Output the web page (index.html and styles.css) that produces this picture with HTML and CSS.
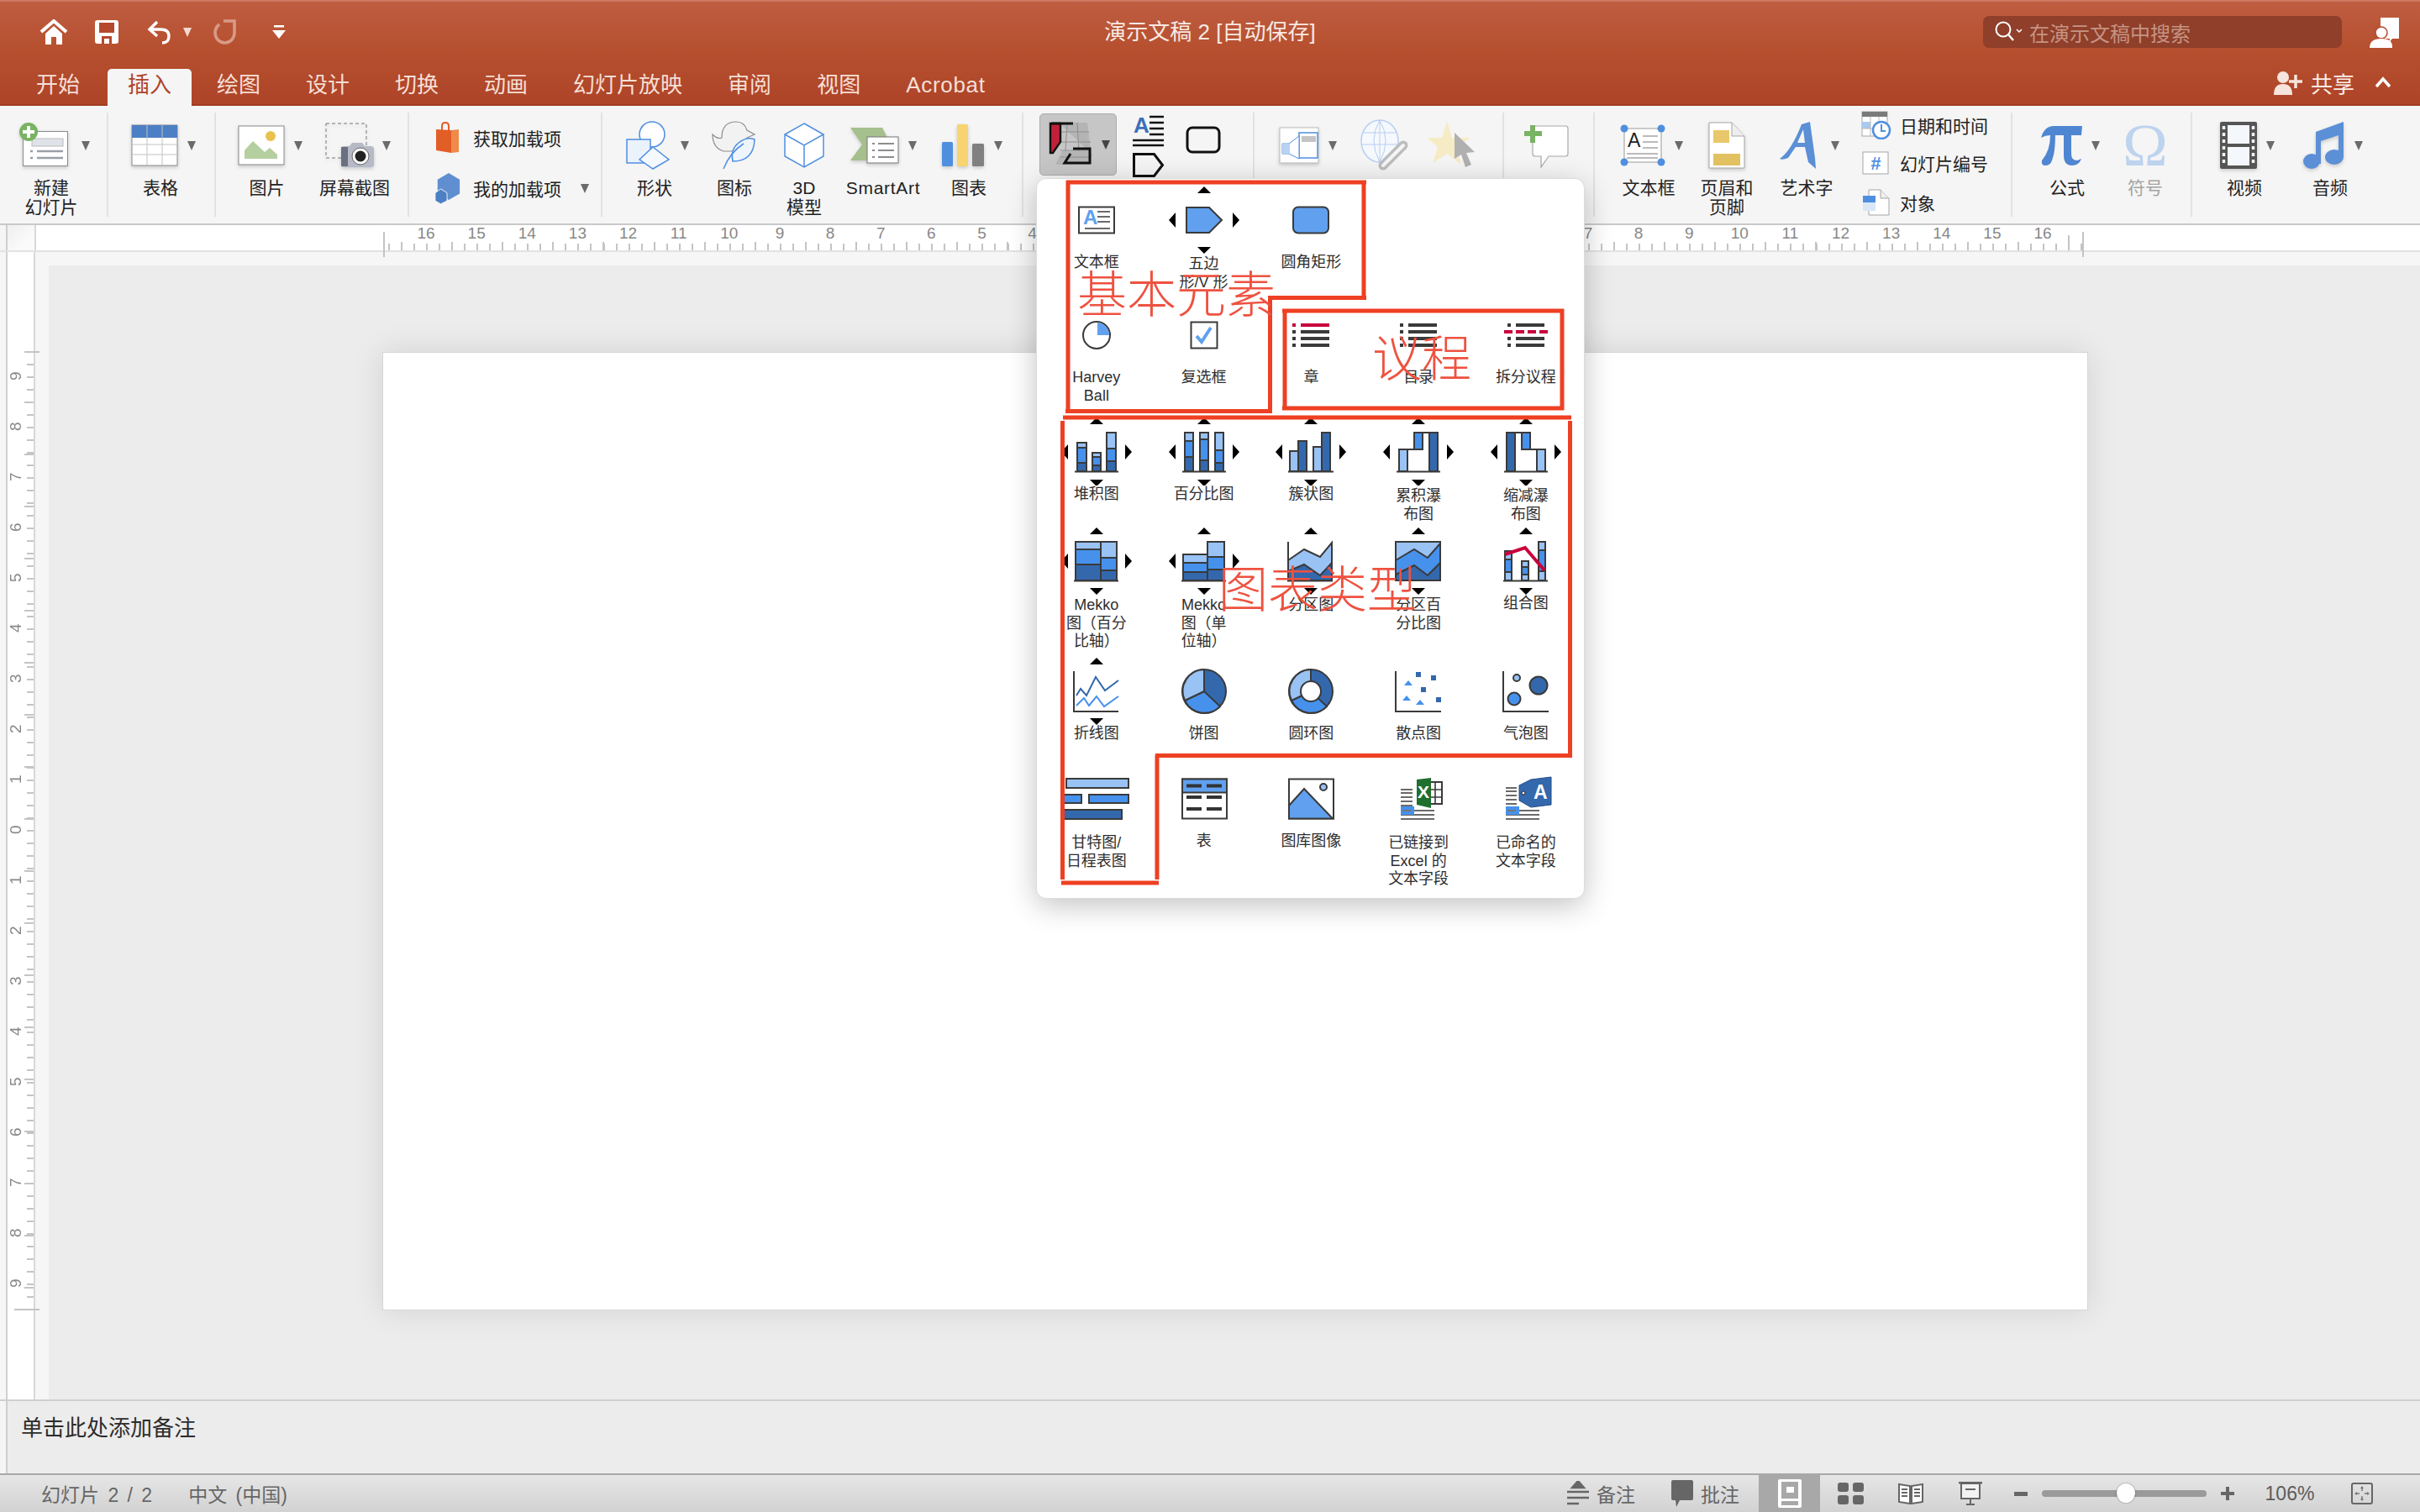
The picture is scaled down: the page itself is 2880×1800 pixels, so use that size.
FILE: index.html
```html
<!DOCTYPE html>
<html lang="zh-CN">
<head>
    <meta charset="UTF-8">
    <title>演示文稿 2</title>
    <link rel="stylesheet" href="styles.css">
</head>
<body>
<svg class="sprites" width="0" height="0">
    <defs>
        <g id="arrows">
            <path d="M0 -41l8 8h-16zM0 41l8 -8h-16zM-42 0l8 -9v18zM42 0l-8 -9v18z"/>
        </g>
        <g id="arrows-tight">
            <path d="M0 -40l8 8h-16zM0 40l8 -8h-16zM-42 0l8 -9v18zM42 0l-8 -9v18z"/>
        </g>
        <g id="arrows-v">
            <path d="M0 -40l8 8h-16zM0 40l8 -8h-16z"/>
        </g>
    </defs>
</svg>

<header class="titlebar">
    <div class="title-row">
        <div class="qat">
            <svg class="qat-home" width="34" height="30" viewBox="0 0 34 30"><path d="M2 15L17 2l15 13" fill="none" stroke="#fff" stroke-width="4"/><path d="M7 17l10-9 10 9v13h-7v-9h-6v9H7z" fill="#fff"/></svg>
            <svg class="qat-save" width="30" height="30" viewBox="0 0 30 30"><path d="M4 1h22q3 0 3 3v22q0 3-3 3H4q-3 0-3-3V4q0-3 3-3z" fill="#fff"/><rect x="6" y="4" width="18" height="12" fill="#b5492e"/><path d="M9 29v-9h12v9h-3v-6h-6v6z" fill="#b5492e"/></svg>
            <svg class="qat-undo" width="30" height="30" viewBox="0 0 30 30"><path d="M12 3L3 12l9 8M4 12h12q10 0 10 8t-8 8" fill="none" stroke="#fff" stroke-width="3.4"/></svg>
            <i class="caret caret-light"></i>
            <svg class="qat-redo" width="30" height="32" viewBox="0 0 30 32"><path d="M13 3h13v14a11.500 12 0 0 1-23 0q0-6 5-10" fill="none" stroke="#d89a87" stroke-width="3.6"/></svg>
            <svg class="qat-more" width="16" height="16" viewBox="0 0 16 16"><path d="M2 0h12v2.500H2zM0 6h16l-8 10z" fill="#fff"/></svg>
        </div>
        <div class="doc-title">演示文稿 2 [自动保存]</div>
        <div class="title-right">
            <div class="search">
                <svg width="36" height="30" viewBox="0 0 36 30"><circle cx="12" cy="12" r="8.500" fill="none" stroke="#fff" stroke-width="2"/><path d="M18 18l6 7" stroke="#fff" stroke-width="2.400"/><path d="M28 12l3 3 3-3" fill="none" stroke="#fff" stroke-width="1.500"/></svg>
                <span>在演示文稿中搜索</span>
            </div>
            <svg class="account" width="36" height="38" viewBox="0 0 36 38"><path d="M13 1h22v25l-8 0-4 5 1-5h-11z" fill="#fff"/><circle cx="14" cy="19" r="7" fill="#fff" stroke="#b5492e" stroke-width="1.500"/><path d="M0 37q0-11 14-11t13 11z" fill="#fff"/></svg>
        </div>
    </div>
    <nav class="tabs">
        <div class="tab tab-first">开始</div>
        <div class="tab tab-active">插入</div>
        <div class="tab">绘图</div>
        <div class="tab">设计</div>
        <div class="tab">切换</div>
        <div class="tab">动画</div>
        <div class="tab">幻灯片放映</div>
        <div class="tab">审阅</div>
        <div class="tab">视图</div>
        <div class="tab tab-latin">Acrobat</div>
        <div class="share">
            <svg width="36" height="30" viewBox="0 0 36 30"><circle cx="11" cy="9" r="7" fill="#f6e4dd"/><path d="M0 30q0-13 11-13t11 13z" fill="#f6e4dd"/><path d="M26 6v16M18 14h16" stroke="#f6e4dd" stroke-width="3.500"/></svg>
            <span>共享</span>
            <svg class="share-chev" width="20" height="14" viewBox="0 0 20 14"><path d="M2 12l8-9 8 9" fill="none" stroke="#fff" stroke-width="3.500"/></svg>
        </div>
    </nav>
</header>

<section class="ribbon">
    <div class="group g-slide">
        <div class="tool shift">
            <div class="tool-icon">
                <svg class="ico" width="60" height="56" viewBox="0 0 60 56"><rect x="5.500" y="11.500" width="53" height="41" fill="#fff" stroke="#8a8a8a"/><rect x="16" y="20" width="37" height="9" fill="#dfe2e8" stroke="#bbb"/><path d="M14 35h3M22 35h31M14 43h3M22 43h31" stroke="#9a9ea6" stroke-width="2.500"/><circle cx="12" cy="12" r="11" fill="#79b364"/><path d="M12 5v14M5 12h14" stroke="#fff" stroke-width="4"/></svg>
                <i class="caret caret-wide"></i>
            </div>
            <div class="tool-label">新建<br>幻灯片</div>
        </div>
    </div>
    <div class="group g-table">
        <div class="tool shift">
            <div class="tool-icon">
                <svg class="ico" width="56" height="50" viewBox="0 0 56 50"><rect x="1" y="1" width="54" height="48" fill="#fff" stroke="#8a8a8a"/><rect x="1" y="1" width="54" height="15" fill="#4d7fc4"/><path d="M19 1v48M37 1v48M1 24h54M1 36h54" stroke="#c2c2c2"/></svg>
                <i class="caret"></i>
            </div>
            <div class="tool-label">表格</div>
        </div>
    </div>
    <div class="group g-media">
        <div class="tool shift">
            <div class="tool-icon">
                <svg class="ico" width="56" height="48" viewBox="0 0 56 48"><rect x="1" y="1" width="54" height="46" fill="#fff" stroke="#8a8a8a"/><path d="M8 40V30l10-11 14 13 6-5 9 8v5z" fill="#b5cfa0"/><ellipse cx="39" cy="13" rx="6" ry="6" fill="#e9c14f"/></svg>
                <i class="caret"></i>
            </div>
            <div class="tool-label">图片</div>
        </div>
        <div class="tool shift">
            <div class="tool-icon">
                <svg class="ico" width="62" height="54" viewBox="0 0 62 54"><rect x="1" y="1" width="48" height="41" fill="none" stroke="#777" stroke-dasharray="4 3"/><path d="M22 28h7l3-4h12l3 4h7q4 0 4 4v18q0 3-4 3H22q-3 0-3-3V32q0-4 3-4z" fill="#b5bac6"/><rect x="19" y="29" width="8" height="23" fill="#6a7082"/><circle cx="42" cy="40" r="10" fill="#fff" stroke="#666"/><circle cx="42" cy="40" r="6.500" fill="#222"/></svg>
                <i class="caret caret-near"></i>
            </div>
            <div class="tool-label">屏幕截图</div>
        </div>
    </div>
    <div class="group g-addins">
        <div class="list-row">
            <svg width="32" height="40" viewBox="0 0 32 40"><path d="M9 11V6q0-4 4-4t4 4v5" fill="none" stroke="#e25e27" stroke-width="2"/><path d="M2 10l18 1v27l-18-3z" fill="#e25e27"/><path d="M20 11l9-1v27l-9 1z" fill="#f08a4a"/></svg>
            <span>获取加载项</span>
        </div>
        <div class="list-row">
            <svg width="32" height="40" viewBox="0 0 34 40"><path d="M18 1l14 8v18l-14 8-14-8V9z" fill="#5f8fd0"/><path d="M8 21l8 5v10l-8 4-7-4V26z" fill="#4d7fc4" stroke="#f5f5f5"/></svg>
            <span>我的加载项</span>
            <i class="caret"></i>
        </div>
    </div>
    <div class="group g-illus">
        <div class="tool shift">
            <div class="tool-icon">
                <svg width="54" height="58" viewBox="0 0 54 58"><circle cx="31" cy="16" r="15" fill="#fff" stroke="#4f8fdf" stroke-width="1.500"/><rect x="1" y="22" width="28" height="28" fill="#eaf2fc" stroke="#4f8fdf" stroke-width="1.500"/><path d="M32 31l19 15-19 11-16-11z" fill="#f5f9fe" stroke="#4f8fdf" stroke-width="1.500"/></svg>
                <i class="caret"></i>
            </div>
            <div class="tool-label">形状</div>
        </div>
        <div class="tool">
            <div class="tool-icon">
                <svg width="54" height="58" viewBox="0 0 54 58"><path d="M1 16q6 6 11 4 0-19 17-19 10 0 13 10l9 5-9 4q2 8-6 16H14Q1 32 1 16z" fill="#f2f2f2" stroke="#8c8c8c" stroke-width="1.200"/><path d="M51 22q-1 26-26 26-3-14 7-22t19-4z" fill="#eef5fd" stroke="#4f8fdf" stroke-width="1.500"/><path d="M14 57q8-20 24-30" fill="none" stroke="#4f8fdf" stroke-width="1.500"/></svg>
            </div>
            <div class="tool-label">图标</div>
        </div>
        <div class="tool">
            <div class="tool-icon">
                <svg width="48" height="54" viewBox="0 0 48 54"><path d="M24 1l23 13v26L24 53 1 40V14z" fill="#fff" stroke="#4f8fdf" stroke-width="1.500"/><path d="M1 14l23 13 23-13M24 27v26" fill="none" stroke="#4f8fdf" stroke-width="1.500"/></svg>
            </div>
            <div class="tool-label">3D<br>模型</div>
        </div>
        <div class="tool">
            <div class="tool-icon">
                <svg class="ico" width="58" height="44" viewBox="0 0 58 44"><path d="M0 1h38l10 20H14z" fill="#a5bf8d"/><path d="M14 21h30L28 40H0z" fill="#a5bf8d"/><rect x="20" y="12" width="37" height="31" fill="#fff" stroke="#777"/><path d="M26 20h3M33 20h19M26 28h3M33 28h19M26 36h3M33 36h19" stroke="#8c8c8c" stroke-width="2"/></svg>
                <i class="caret"></i>
            </div>
            <div class="tool-label tool-label-latin">SmartArt</div>
        </div>
        <div class="tool shift">
            <div class="tool-icon">
                <svg class="ico" width="52" height="52" viewBox="0 0 52 52"><rect x="1" y="22" width="13" height="29" rx="1.500" fill="#4f8fdf"/><rect x="19" y="1" width="13" height="50" rx="1.500" fill="#f7d46f"/><rect x="37" y="24" width="14" height="27" rx="1.500" fill="#808080"/></svg>
                <i class="caret"></i>
            </div>
            <div class="tool-label">图表</div>
        </div>
    </div>
    <div class="group g-addon">
        <div class="addon-btn">
            <svg class="addon-ico" width="54" height="54" viewBox="0 0 54 54"><path d="M12 1h34l4 34H16l-8 16h40l4-12" fill="#b4b4b4"/><path d="M22 1l-2 34M34 1l2 34M10 12h38M8 24h42M14 34h36M14 42h34" stroke="#8e8e8e" fill="none"/><path d="M2 2h12v22L5 37H2z" fill="#c2203a" stroke="#111" stroke-width="2.400"/><path d="M3 2h26" stroke="#111" stroke-width="3"/><path d="M29 32h20v17H19l7-11" fill="none" stroke="#111" stroke-width="3"/></svg>
            <i class="caret caret-dark"></i>
        </div>
        <svg class="addon-side" width="106" height="80" viewBox="0 0 106 80"><text x="1" y="24" class="addon-a">A</text><path d="M20 5h17M20 12h17M20 19h17M20 26h17M0 33h37M0 39h37" stroke="#111" stroke-width="2.400"/><rect x="65" y="18" width="38" height="29" rx="6" fill="none" stroke="#111" stroke-width="3"/><path d="M1.500 49.500h24l10 13-10 13h-24z" fill="none" stroke="#111" stroke-width="3"/></svg>
    </div>
    <div class="group g-links">
        <svg class="ico" width="48" height="44" viewBox="0 0 48 44"><rect x="1" y="1" width="46" height="42" fill="#fff" stroke="#bbb"/><rect x="24" y="7" width="22" height="30" fill="#fff" stroke="#4f8fdf" stroke-width="1.500"/><rect x="27" y="11" width="17" height="7" fill="#c4c4c4"/><path d="M24 11L12 20H4v12h8l12 6z" fill="#fff" stroke="#4f8fdf"/><rect x="4" y="20" width="9" height="12" fill="#b8d2f2"/></svg>
        <i class="caret"></i>
        <svg class="link-ico" width="60" height="62" viewBox="0 0 60 62"><ellipse cx="24" cy="26" rx="22" ry="25" fill="#f5f8fc" stroke="#b6cff0" stroke-width="1.500"/><path d="M24 1v50M3 16h42M2 30h44M24 1q-14 24 0 50M24 1q14 24 0 50" fill="none" stroke="#b6cff0"/><path d="M28 55l24-24" stroke="#bdbdbd" stroke-width="11" stroke-linecap="round"/><path d="M28 55l24-24" stroke="#f5f5f5" stroke-width="4" stroke-linecap="round"/></svg>
        <svg class="star-ico" width="64" height="58" viewBox="0 0 64 58"><path d="M24 0l6 20 22 0-17 12 6 20-17-13-17 11 6-19L0 20h18z" fill="#f5ecc6"/><path d="M33 14l0 31 8-5 5 15 7-3-6-14 10-1z" fill="#b0b0b0"/></svg>
    </div>
    <div class="group g-comment">
        <svg width="60" height="52" viewBox="0 0 60 52"><path d="M11 2h39q3 0 3 3v30q0 3-3 3H30l-9 13v-13h-7q-3 0-3-3z" fill="#fff" stroke="#a8a8a8" stroke-width="1.200"/><path d="M11 1v21M1 11h21" stroke="#79b364" stroke-width="6"/></svg>
    </div>
    <div class="group g-text">
        <div class="tool shift">
            <div class="tool-icon">
                <svg width="54" height="50" viewBox="0 0 54 50"><rect x="5" y="5" width="44" height="40" fill="#fff" stroke="#999"/><text x="9" y="27" class="mini-a">A</text><path d="M27 14h18M27 21h18M27 28h18M8 35h37M8 40h37" stroke="#bbb" stroke-width="2"/><circle cx="5" cy="5" r="4.500" fill="#4f8fdf"/><circle cx="49" cy="5" r="4.500" fill="#4f8fdf"/><circle cx="5" cy="45" r="4.500" fill="#4f8fdf"/><circle cx="49" cy="45" r="4.500" fill="#4f8fdf"/></svg>
                <i class="caret"></i>
            </div>
            <div class="tool-label">文本框</div>
        </div>
        <div class="tool">
            <div class="tool-icon">
                <svg class="ico" width="44" height="56" viewBox="0 0 44 56"><path d="M1 1h27l15 16v38H1z" fill="#fff" stroke="#a5a5a5"/><path d="M28 1v16h15" fill="#eee" stroke="#a5a5a5"/><rect x="6" y="10" width="19" height="15" fill="#e9c86b"/><rect x="6" y="38" width="32" height="14" fill="#e2c161"/></svg>
            </div>
            <div class="tool-label">页眉和<br>页脚</div>
        </div>
        <div class="tool shift">
            <div class="tool-icon">
                <svg width="50" height="56" viewBox="0 0 50 56"><path d="M0 44q14-10 26-41l10-3 6 43 1 13-9-8-4-18H19l-9 13q-7 3-10 1zM21 25h9l-2-16z" fill="#5b8fd6"/></svg>
                <i class="caret"></i>
            </div>
            <div class="tool-label">艺术字</div>
        </div>
        <div class="mini-list">
            <div class="mini-row">
                <svg width="36" height="34" viewBox="0 0 36 34"><rect x="1" y="1" width="30" height="29" fill="#fff" stroke="#a5a5a5"/><rect x="1" y="1" width="30" height="6" fill="#7a7a7a"/><rect x="1" y="13" width="10" height="8" fill="#a9c9f0"/><path d="M11 7v23M21 7v23M1 21h30" stroke="#bbb"/><circle cx="24" cy="23" r="10" fill="#fff" stroke="#4f8fdf" stroke-width="2.500"/><path d="M24 16v8h5" fill="none" stroke="#4f8fdf" stroke-width="2"/></svg>
                <span>日期和时间</span>
            </div>
            <div class="mini-row">
                <svg width="36" height="28" viewBox="0 0 36 28"><rect x="2" y="1" width="30" height="26" fill="#fff" stroke="#a5a5a5"/><text x="17" y="22" class="mini-hash">#</text></svg>
                <span>幻灯片编号</span>
            </div>
            <div class="mini-row">
                <svg width="36" height="32" viewBox="0 0 36 32"><path d="M9 1h14l10 10v20H9z" fill="#fff" stroke="#a5a5a5"/><path d="M23 1v10h10" fill="#eee" stroke="#a5a5a5"/><rect x="2" y="8" width="15" height="18" fill="#d9e7f8"/><rect x="2" y="8" width="15" height="8" fill="#4f8fdf"/></svg>
                <span>对象</span>
            </div>
        </div>
    </div>
    <div class="group g-symbols">
        <div class="tool shift">
            <div class="tool-icon">
                <svg width="50" height="48" viewBox="0 0 50 48"><path d="M1 15Q5 1 16 1H50L49 12H37V34Q37 42 44 42L49 40Q46 48 38 48Q28 48 28 36V12H18Q18 32 14 42Q12 48 6 48Q1 48 2 42Q12 30 12 12Q6 12 1 15z" fill="#4f86d2"/></svg>
                <i class="caret"></i>
            </div>
            <div class="tool-label">公式</div>
        </div>
        <div class="tool">
            <div class="tool-icon"><span class="glyph-omega">Ω</span></div>
            <div class="tool-label tool-label-off">符号</div>
        </div>
    </div>
    <div class="group g-av">
        <div class="tool shift">
            <div class="tool-icon">
                <svg class="ico" width="44" height="56" viewBox="0 0 44 56"><rect width="44" height="56" rx="2" fill="#555"/><rect x="9" y="4" width="26" height="22" fill="#f4f7fb"/><rect x="9" y="30" width="26" height="22" fill="#f4f7fb"/><path d="M4.500 5v46M39.500 5v46" stroke="#f4f4f4" stroke-width="3.500" stroke-dasharray="4 4"/></svg>
                <i class="caret"></i>
            </div>
            <div class="tool-label">视频</div>
        </div>
        <div class="tool shift">
            <div class="tool-icon">
                <svg class="ico" width="50" height="56" viewBox="0 0 50 56"><path d="M15 12L48 0v42h-6V16L21 23v27h-6z" fill="#5b8fd6"/><ellipse cx="10" cy="47" rx="10" ry="9" fill="#5b8fd6"/><ellipse cx="37" cy="42" rx="11" ry="9" fill="#5b8fd6"/></svg>
                <i class="caret"></i>
            </div>
            <div class="tool-label">音频</div>
        </div>
    </div>
</section>

<main class="editor">
    <div class="ruler-row">
        <div class="ruler-gutter"><div class="ruler-corner"></div></div>
        <div class="ruler-h">
            <div class="scale-h">
                <span>16</span><span>15</span><span>14</span><span>13</span><span>12</span><span>11</span><span>10</span><span>9</span><span>8</span><span>7</span><span>6</span><span>5</span><span>4</span><span>3</span><span>2</span><span>1</span><span>0</span><span>1</span><span>2</span><span>3</span><span>4</span><span>5</span><span>6</span><span>7</span><span>8</span><span>9</span><span>10</span><span>11</span><span>12</span><span>13</span><span>14</span><span>15</span><span>16</span>
            </div>
        </div>
    </div>
    <div class="editor-body">
        <div class="rail">
            <div class="ruler-v">
                <div class="scale-v">
                    <span>9</span><span>8</span><span>7</span><span>6</span><span>5</span><span>4</span><span>3</span><span>2</span><span>1</span><span>0</span><span>1</span><span>2</span><span>3</span><span>4</span><span>5</span><span>6</span><span>7</span><span>8</span><span>9</span>
                </div>
            </div>
        </div>
        <div class="canvas-band">
            <div class="canvas"><div class="slide"></div></div>
        </div>
    </div>
</main>

<section class="notes"><span>单击此处添加备注</span></section>

<footer class="statusbar">
    <div class="status-left">
        <span>幻灯片 2 / 2</span>
        <span>中文 (中国)</span>
    </div>
    <div class="status-right">
        <div class="status-item">
            <svg width="26" height="30" viewBox="0 0 26 30"><path d="M13 0l7 8H6zM0 13h26M0 20h26M0 27h14" stroke="#666" stroke-width="2.400" fill="#666"/></svg>
            <span>备注</span>
        </div>
        <div class="status-item">
            <svg width="26" height="32" viewBox="0 0 26 32"><path d="M2 0h22q2 0 2 2v20q0 2-2 2H10l-4 8-1-8H2q-2 0-2-2V2q0-2 2-2z" fill="#666"/></svg>
            <span>批注</span>
        </div>
        <div class="view-active">
            <svg width="28" height="34" viewBox="0 0 28 34"><rect width="28" height="34" rx="2" fill="#fff"/><rect x="4" y="3" width="20" height="20" fill="#a8a8a8"/><rect x="10" y="9" width="9" height="7" fill="#fff"/><rect x="4" y="26" width="20" height="5" fill="#a8a8a8"/></svg>
        </div>
        <svg width="31" height="26" viewBox="0 0 31 26"><rect width="13" height="11" rx="3" fill="#666"/><rect x="18" width="13" height="11" rx="3" fill="#666"/><rect y="15" width="13" height="11" rx="3" fill="#666"/><rect x="18" y="15" width="13" height="11" rx="3" fill="#666"/></svg>
        <svg width="30" height="26" viewBox="0 0 30 26"><path d="M1 2l13 2v21L1 23zM29 2L16 4v21l13-2z" fill="#fff" stroke="#666" stroke-width="2"/><path d="M4 8h7M4 12h7M4 16h7M19 8h7M19 12h7M19 16h7" stroke="#666" stroke-width="2"/></svg>
        <svg width="30" height="28" viewBox="0 0 30 28"><path d="M1 1h28" stroke="#666" stroke-width="3"/><path d="M4 2h22v18H4z" fill="#f2f2f2" stroke="#666" stroke-width="2"/><path d="M9 9h12" stroke="#666" stroke-width="2"/><path d="M15 20v6M10 27h10" stroke="#666" stroke-width="2"/></svg>
        <i class="zoom-minus"></i>
        <div class="zoom-track"><i class="zoom-thumb"></i></div>
        <svg width="16" height="16" viewBox="0 0 16 16"><path d="M8 0v16M0 8h16" stroke="#666" stroke-width="4"/></svg>
        <span class="zoom-pct">106%</span>
        <svg width="26" height="26" viewBox="0 0 26 26"><rect x="1" y="1" width="24" height="24" rx="2" fill="none" stroke="#666" stroke-width="2"/><path d="M13 5v5M13 16v5M5 13h5M16 13h5" stroke="#777" stroke-width="1.500"/><path d="M13 4l-2 3h4zM13 22l-2-3h4zM4 13l3-2v4zM22 13l-3-2v4z" fill="#777"/></svg>
    </div>
</footer>

<div class="gallery">
    <div class="gallery-grid">
        <div class="cell">
            <svg width="110" height="80" viewBox="-55 -40 110 80"><rect class="line" x="-21" y="-15.500" width="42" height="31" fill="#fff"/><text x="-16" y="5" class="g-a">A</text><path class="line thin" d="M1 -10h15M1 -4h15M1 2h15M-14 10h30"/></svg>
            <div class="cell-label">文本框</div>
        </div>
        <div class="cell">
            <svg width="110" height="80" viewBox="-55 -40 110 80"><use href="#arrows-tight"/><path class="line blue" d="M-21 -15H6L21 0L6 15H-21z"/></svg>
            <div class="cell-label cell-label-low">五边<br>形/V 形</div>
        </div>
        <div class="cell">
            <svg width="110" height="80" viewBox="-55 -40 110 80"><rect class="line blue" x="-21" y="-15.500" width="42" height="31" rx="6"/></svg>
            <div class="cell-label">圆角矩形</div>
        </div>
        <div class="cell"></div>
        <div class="cell"></div>

        <div class="cell">
            <svg width="110" height="80" viewBox="-55 -40 110 80"><circle class="line" cx="0" cy="0" r="16" fill="#fff"/><path class="blue" d="M1 -15A15 15 0 0 1 15 0H1z"/></svg>
            <div class="cell-label">Harvey<br>Ball</div>
        </div>
        <div class="cell">
            <svg width="110" height="80" viewBox="-55 -40 110 80"><rect class="line" x="-15.500" y="-15.500" width="31" height="31" fill="#fff"/><path d="M-9 1l6 7L8 -9" fill="none" stroke="#60a0ef" stroke-width="4"/></svg>
            <div class="cell-label">复选框</div>
        </div>
        <div class="cell">
            <svg width="110" height="80" viewBox="-55 -40 110 80"><g transform="translate(-22 -14)"><rect class="red" y="0" width="4" height="4"/><rect class="red" x="10" y="0" width="34" height="4"/><rect class="ink" y="8" width="4" height="4"/><rect class="ink" x="10" y="8" width="34" height="4"/><rect class="ink" y="16" width="4" height="4"/><rect class="ink" x="10" y="16" width="34" height="4"/><rect class="ink" y="24" width="4" height="4"/><rect class="ink" x="10" y="24" width="34" height="4"/></g></svg>
            <div class="cell-label">章</div>
        </div>
        <div class="cell">
            <svg width="110" height="80" viewBox="-55 -40 110 80"><g transform="translate(-22 -14)"><rect class="ink" y="0" width="4" height="4"/><rect class="ink" x="10" y="0" width="34" height="4"/><rect class="ink" y="8" width="4" height="4"/><rect class="ink" x="10" y="8" width="34" height="4"/><rect class="ink" y="16" width="4" height="4"/><rect class="ink" x="10" y="16" width="34" height="4"/><rect class="ink" y="24" width="4" height="4"/><rect class="ink" x="10" y="24" width="34" height="4"/></g></svg>
            <div class="cell-label">目录</div>
        </div>
        <div class="cell">
            <svg width="110" height="80" viewBox="-55 -40 110 80"><g transform="translate(-26 -14)"><rect class="ink" x="4" y="0" width="4" height="4"/><rect class="ink" x="14" y="0" width="34" height="4"/><path d="M0 10h52" stroke="#c8003c" stroke-width="4" stroke-dasharray="10 4"/><rect class="ink" x="4" y="16" width="4" height="4"/><rect class="ink" x="14" y="16" width="34" height="4"/><rect class="ink" x="4" y="24" width="4" height="4"/><rect class="ink" x="14" y="24" width="34" height="4"/></g></svg>
            <div class="cell-label">拆分议程</div>
        </div>

        <div class="cell">
            <svg width="110" height="80" viewBox="-55 -40 110 80"><use href="#arrows"/><path class="base" d="M-26 23.500H26"/>
                <rect class="line light" x="-23" y="-11" width="11" height="6"/><rect class="line mid" x="-23" y="-5" width="11" height="18"/><rect class="line dark" x="-23" y="13" width="11" height="10"/>
                <rect class="line light" x="-5" y="1" width="10" height="5"/><rect class="line mid" x="-5" y="6" width="10" height="10"/><rect class="line dark" x="-5" y="16" width="10" height="7"/>
                <rect class="line light" x="12" y="-23" width="11" height="19"/><rect class="line mid" x="12" y="-4" width="11" height="15"/><rect class="line dark" x="12" y="11" width="11" height="12"/></svg>
            <div class="cell-label">堆积图</div>
        </div>
        <div class="cell">
            <svg width="110" height="80" viewBox="-55 -40 110 80"><use href="#arrows"/><path class="base" d="M-26 23.500H26"/>
                <rect class="line light" x="-23" y="-23" width="10" height="10"/><rect class="line mid" x="-23" y="-13" width="10" height="19"/><rect class="line dark" x="-23" y="6" width="10" height="17"/>
                <rect class="line light" x="-5" y="-23" width="10" height="8"/><rect class="line mid" x="-5" y="-15" width="10" height="25"/><rect class="line dark" x="-5" y="10" width="10" height="13"/>
                <rect class="line light" x="13" y="-23" width="10" height="21"/><rect class="line mid" x="13" y="-2" width="10" height="15"/><rect class="line dark" x="13" y="13" width="10" height="10"/></svg>
            <div class="cell-label">百分比图</div>
        </div>
        <div class="cell">
            <svg width="110" height="80" viewBox="-55 -40 110 80"><use href="#arrows"/><path class="base" d="M-27 23.500H27"/>
                <rect class="line light" x="-25" y="-1" width="10" height="24"/><rect class="line dark" x="-15" y="-13" width="10" height="36"/><rect class="line light" x="3" y="-6" width="10" height="29"/><rect class="line dark" x="13" y="-23" width="10" height="46"/></svg>
            <div class="cell-label">簇状图</div>
        </div>
        <div class="cell">
            <svg width="110" height="80" viewBox="-55 -40 110 80"><use href="#arrows"/><path class="line" fill="#fff" d="M-23 23V-3H-5V-23H23V23"/><rect class="line light" x="-23" y="-3" width="10" height="26"/><rect class="line mid" x="-5" y="-23" width="10" height="20"/><rect class="line dark" x="13" y="-23" width="10" height="46"/><path class="base" d="M-26 23.500H26"/></svg>
            <div class="cell-label cell-label-low">累积瀑<br>布图</div>
        </div>
        <div class="cell">
            <svg width="110" height="80" viewBox="-55 -40 110 80"><use href="#arrows"/><path class="line" fill="#fff" d="M-23 23V-23H5V-3H23V23"/><rect class="line dark" x="-23" y="-23" width="10" height="46"/><rect class="line mid" x="-5" y="-23" width="10" height="20"/><rect class="line light" x="13" y="-3" width="10" height="26"/><path class="base" d="M-26 23.500H26"/></svg>
            <div class="cell-label cell-label-low">缩减瀑<br>布图</div>
        </div>

        <div class="cell">
            <svg width="110" height="80" viewBox="-55 -40 110 80"><use href="#arrows-tight"/><rect class="line light" x="-25" y="-23" width="30" height="9"/><rect class="line mid" x="-25" y="-14" width="30" height="18"/><rect class="line dark" x="-25" y="4" width="30" height="19"/><rect class="line light" x="5" y="-23" width="19" height="19"/><rect class="line mid" x="5" y="-4" width="19" height="15"/><rect class="line dark" x="5" y="11" width="19" height="12"/><path class="base" d="M-27 23.500H26"/></svg>
            <div class="cell-label cell-label-low">Mekko<br>图（百分<br>比轴）</div>
        </div>
        <div class="cell">
            <svg width="110" height="80" viewBox="-55 -40 110 80"><use href="#arrows-tight"/><rect class="line light" x="-25" y="-8" width="29" height="10"/><rect class="line mid" x="-25" y="2" width="29" height="11"/><rect class="line dark" x="-25" y="13" width="29" height="10"/><rect class="line light" x="4" y="-23" width="20" height="18"/><rect class="line mid" x="4" y="-5" width="20" height="15"/><rect class="line dark" x="4" y="10" width="20" height="13"/><path class="base" d="M-27 23.500H26"/></svg>
            <div class="cell-label cell-label-low">Mekko<br>图（单<br>位轴）</div>
        </div>
        <div class="cell">
            <svg width="110" height="80" viewBox="-55 -40 110 80"><use href="#arrows-v"/><path class="line light" d="M-27 -1L-8 -14L11 -5L25 -22V23H-27z"/><path class="line dark" d="M-27 12L-8 4L11 17L25 2V23H-27z"/><path class="base" d="M-27 -23V23.500H26"/></svg>
            <div class="cell-label cell-label-low">分区图</div>
        </div>
        <div class="cell">
            <svg width="110" height="80" viewBox="-55 -40 110 80"><use href="#arrows-v"/><rect class="light" x="-27" y="-23" width="53" height="46"/><path class="line mid" d="M-27 -1L-5 -14L11 -4L26 -21V23H-27z"/><path class="line dark" d="M-27 16L-5 5L11 17L26 2V23H-27z"/><rect class="base" x="-27" y="-23" width="53" height="46" fill="none"/></svg>
            <div class="cell-label cell-label-low">分区百<br>分比图</div>
        </div>
        <div class="cell">
            <svg width="110" height="80" viewBox="-55 -40 110 80"><use href="#arrows-v"/><rect class="line light" x="-25" y="-12" width="8" height="10"/><rect class="line mid" x="-25" y="-2" width="8" height="15"/><rect class="line light" x="-25" y="13" width="8" height="10"/><rect class="line light" x="-5" y="0" width="8" height="7"/><rect class="line mid" x="-5" y="7" width="8" height="9"/><rect class="line light" x="-5" y="16" width="8" height="7"/><rect class="line light" x="15" y="-23" width="8" height="10"/><rect class="line mid" x="15" y="-13" width="8" height="25"/><rect class="line light" x="15" y="12" width="8" height="11"/><path class="base" d="M-27 23.500H26"/><path d="M-25 -8L-1 -16L22 11" fill="none" stroke="#c8003c" stroke-width="4"/></svg>
            <div class="cell-label">组合图</div>
        </div>

        <div class="cell">
            <svg width="110" height="80" viewBox="-55 -40 110 80"><use href="#arrows-v"/><path class="base" d="M-27 -24V24H26"/><path d="M-24 5L-19 -3L-12 5L-1 -17L10 -1L26 -13" fill="none" stroke="#3368ad" stroke-width="2"/><path d="M-24 17L-15 8L-9 17L0 6L9 18L26 6" fill="none" stroke="#4691ec" stroke-width="2"/></svg>
            <div class="cell-label">折线图</div>
        </div>
        <div class="cell">
            <svg width="110" height="80" viewBox="-55 -40 110 80"><circle class="line dark" r="26"/><path class="line mid" d="M0 0L19 18A26 26 0 0 1 -23 11z"/><path class="line light" d="M0 0L-23 11A26 26 0 0 1 0 -26z"/></svg>
            <div class="cell-label">饼图</div>
        </div>
        <div class="cell">
            <svg width="110" height="80" viewBox="-55 -40 110 80"><circle class="line dark" r="26"/><path class="line mid" d="M0 0L19 18A26 26 0 0 1 -23 11z"/><path class="line light" d="M0 0L-23 11A26 26 0 0 1 0 -26z"/><circle class="line" r="12" fill="#fff"/></svg>
            <div class="cell-label">圆环图</div>
        </div>
        <div class="cell">
            <svg width="110" height="80" viewBox="-55 -40 110 80"><path class="base" d="M-27 -24V24H27"/><rect class="dark" x="-3" y="-23" width="6" height="6"/><rect class="dark" x="15" y="-19" width="6" height="6"/><rect class="dark" x="3" y="-5" width="6" height="6"/><rect class="dark" x="21" y="7" width="6" height="6"/><path class="mid" d="M-12 -13l5 6h-10zM-14 5l5 6h-10zM2 10l5 6h-10z"/></svg>
            <div class="cell-label">散点图</div>
        </div>
        <div class="cell">
            <svg width="110" height="80" viewBox="-55 -40 110 80"><path class="base" d="M-27 -24V24H27"/><circle class="line light" cx="-11" cy="-16" r="4"/><circle class="line dark" cx="15" cy="-7" r="10.500"/><circle class="line mid" cx="-14" cy="9" r="7.500"/></svg>
            <div class="cell-label">气泡图</div>
        </div>

        <div class="cell">
            <svg width="110" height="80" viewBox="-55 -40 110 80"><rect class="line light" x="-36" y="-24" width="74" height="11"/><rect class="line mid" x="-39" y="-5" width="21" height="10"/><rect class="line mid" x="-9" y="-5" width="47" height="10"/><rect class="line dark" x="-39" y="13" width="69" height="11"/></svg>
            <div class="cell-label cell-label-low">甘特图/<br>日程表图</div>
        </div>
        <div class="cell">
            <svg width="110" height="80" viewBox="-55 -40 110 80"><rect class="line" x="-26" y="-23.500" width="53" height="47" fill="#fff"/><rect class="line blue" x="-26" y="-23.500" width="53" height="16"/><path d="M-21 -15.500h18M3 -15.500h18M-21 -2h18M3 -2h18M-21 12h18M3 12h18" stroke="#333" stroke-width="4"/></svg>
            <div class="cell-label">表</div>
        </div>
        <div class="cell">
            <svg width="110" height="80" viewBox="-55 -40 110 80"><rect class="line" x="-26" y="-23.500" width="53" height="47" fill="#fff"/><path class="line blue" d="M-26 23.500V8L-8 -12L26 23.500z"/><ellipse class="line light" cx="15" cy="-14" rx="4" ry="4"/></svg>
            <div class="cell-label">图库图像</div>
        </div>
        <div class="cell">
            <svg width="110" height="80" viewBox="-55 -40 110 80"><path class="line" fill="#fff" d="M12 -20h16v26h-16z"/><path class="line thin" d="M20 -20v26M12 -11h16M12 -2h16"/><path d="M-2 -23l17 -2v36l-17 -4z" fill="#1f6f2e"/><text x="-1" y="-1" class="g-x">X</text><path class="line thin" d="M-21 -11h14M-21 -7h14M-21 -2h14M-21 3h14M-21 8h14"/><path class="line thin" d="M-21 14h40M-21 19h40M-21 24h40"/><rect class="mid" x="-21" y="9" width="16" height="10"/><path d="M-19 14h10" stroke="#777" stroke-width="2"/></svg>
            <div class="cell-label cell-label-low">已链接到<br>Excel 的<br>文本字段</div>
        </div>
        <div class="cell">
            <svg width="110" height="80" viewBox="-55 -40 110 80"><path class="line thin" d="M-24 -13h13M-24 -9h13M-24 -4h13M-24 1h13M-24 6h13M-24 14h40M-24 19h40M-24 24h40"/><path d="M-8 -16L6 -23L30 -26V7L6 10L-8 2L-8 -16z" fill="#3368ad" stroke="#244d85"/><circle cx="-3" cy="-7" r="2" fill="#fff" stroke="#222"/><text x="9" y="0" class="g-tag">A</text><rect class="mid" x="-24" y="9" width="16" height="10"/><path d="M-22 14h10" stroke="#777" stroke-width="2"/></svg>
            <div class="cell-label cell-label-low">已命名的<br>文本字段</div>
        </div>
    </div>
</div>

<svg class="markup" width="2880" height="1800" viewBox="0 0 2880 1800">
    <path d="M1269 217H1626M1623 215V357M1626 354.500H1510M1511.500 352V491M1514 489.500H1268M1271 491V215"/>
    <path d="M1529 368V488M1526 370H1861M1859 368V488M1861 486H1526"/>
    <path d="M1265 497H1870M1264.500 501V1047M1868.500 501V902M1871 899.500H1375M1377 899V1047M1263 1051H1379"/>
</svg>
<div class="mark-note note-basic">基本元素</div>
<div class="mark-note note-agenda">议程</div>
<div class="mark-note note-charts">图表类型</div>
</body>
</html>
```

FILE: styles.css
```css
* {
    margin: 0;
    padding: 0;
    box-sizing: border-box;
}

html, body {
    width: 2880px;
    height: 1800px;
    overflow: hidden;
}

body {
    position: relative;
    display: flex;
    flex-direction: column;
    background: #ececec;
    color: #222;
    font-family: "Liberation Sans", "Noto Sans CJK SC", sans-serif;
    font-size: 21px;
}

.sprites {
    position: absolute;
}

svg {
    flex: none;
    display: block;
}

/* title bar */
.titlebar {
    height: 126px;
    flex: none;
    background: linear-gradient(#bf5d42, #b6502f 45%, #ae4428);
    border-top: 2px solid #cd7a63;
    border-bottom: 2px solid #a03d22;
}

.title-row {
    height: 80px;
    display: grid;
    grid-template-columns: 1fr auto 1fr;
    align-items: start;
}

.qat {
    display: flex;
    align-items: center;
    height: 72px;
    padding-left: 47px;
}

.qat-save { margin-left: 31px; }
.qat-undo { margin-left: 33px; }
.qat-redo { margin-left: 25px; }
.qat-more { margin-left: 41px; }

.caret {
    flex: none;
    display: block;
    width: 0;
    height: 0;
    margin-left: 11px;
    border-left: 5px solid transparent;
    border-right: 5px solid transparent;
    border-top: 11px solid #6b6b6b;
}

.caret-light {
    margin-left: 13px;
    border-top-color: #f3d9cf;
}

.caret-wide { margin-left: 15px; }
.caret-near { margin-left: 6px; }
.caret-dark { border-top-color: #444; margin-left: 9px; }

.doc-title {
    height: 72px;
    line-height: 72px;
    font-size: 26px;
    color: #f8e9e3;
}

.title-right {
    display: flex;
    justify-content: flex-end;
    align-items: flex-start;
    padding-right: 24px;
}

.search {
    width: 427px;
    height: 38px;
    margin-top: 17px;
    padding-left: 12px;
    display: flex;
    align-items: center;
    gap: 7px;
    background: #8f3f2a;
    border-radius: 7px;
    color: #c79382;
    font-size: 24px;
}

.account {
    margin: 18px 0 0 33px;
}

.tabs {
    height: 44px;
    display: flex;
    gap: 6px;
    padding-left: 19px;
    font-size: 26px;
    color: #f6dfd6;
}

.tab {
    height: 44px;
    line-height: 38px;
    padding: 0 24px;
    border-radius: 5px 5px 0 0;
}

.tab-first {
    margin-right: 3px;
}

.tab-latin {
    letter-spacing: 0.7px;
}

.tab-active {
    background: #f5f5f5;
    color: #b0452a;
}

.share {
    margin-left: auto;
    display: flex;
    align-items: center;
    height: 32px;
    padding-right: 34px;
    color: #fbeee9;
    font-size: 26px;
}

.share span { margin-left: 8px; }
.share-chev { margin-left: 24px; }

/* ribbon */
.ribbon {
    height: 142px;
    flex: none;
    display: flex;
    padding-top: 8px;
    background: #f5f5f5;
    border-bottom: 2px solid #c9c9c9;
}

.group {
    height: 124px;
    flex: none;
    display: grid;
    grid-auto-flow: column;
    justify-content: start;
    border-right: 2px solid #e2e2e2;
}

.g-slide { width: 129px; grid-template-columns: 122px; }
.g-table { width: 128px; grid-template-columns: 124px; }
.g-media { width: 230px; grid-template-columns: 121px 88px; }
.g-illus { width: 501px; grid-template-columns: 124px 66px 100px 88px 116px; }
.g-text { width: 497px; grid-template-columns: 128px 58px 132px auto; }
.g-symbols { width: 214px; grid-template-columns: 130px 56px; }
.g-av { width: 271px; border-right: 0; grid-template-columns: 124px 80px; }

.tool {
    display: flex;
    flex-direction: column;
    align-items: center;
}

.tool-icon {
    height: 78px;
    display: flex;
    align-items: center;
}

.shift .tool-icon {
    margin-left: 7px;
}

.tool-label {
    line-height: 23px;
    text-align: center;
    white-space: nowrap;
}

.tool-label-latin {
    letter-spacing: 0.7px;
}

.tool-label-off {
    color: #a3a3a3;
}

.ico {
    filter: drop-shadow(0 2px 2px rgba(0, 0, 0, 0.18));
}

.g-addins {
    width: 230px;
    grid-auto-flow: row;
    align-content: start;
    row-gap: 20px;
    padding: 10px 0 0 30px;
}

.list-row, .mini-row {
    display: flex;
    align-items: center;
    white-space: nowrap;
}

.list-row {
    height: 40px;
    gap: 14px;
}

.g-addins .caret { margin-left: 9px; }

.g-addon {
    width: 275px;
    display: flex;
    padding-left: 19px;
}

.addon-btn {
    width: 92px;
    height: 74px;
    margin-top: 1px;
    display: flex;
    align-items: center;
    padding-left: 10px;
    background: #c6c6c6;
    border: 1px solid #acacac;
    border-radius: 5px;
}

.addon-ico {
    filter: blur(0.7px);
}

.addon-side {
    margin: 0 0 0 19px;
}

.addon-a {
    font-size: 26px;
    font-weight: bold;
    fill: #3d6fb8;
}

.g-links {
    width: 297px;
    height: 124px;
    display: flex;
    align-items: center;
    align-content: start;
    padding: 0 0 46px 29px;
}

.link-ico { margin-left: 27px; }
.star-ico { margin-left: 20px; }

.g-comment {
    width: 108px;
    padding: 14px 0 0 23px;
}

.mini-list {
    margin-left: -1px;
    margin-top: -2px;
    display: flex;
    flex-direction: column;
}

.mini-row {
    gap: 10px;
}

.mini-row:nth-child(1) { height: 34px; margin-bottom: 14px; }
.mini-row:nth-child(2) { height: 28px; margin-bottom: 17px; }
.mini-row:nth-child(3) { height: 32px; }

.mini-a {
    font-size: 23px;
    fill: #222;
}

.mini-hash {
    font-size: 22px;
    font-style: italic;
    font-weight: bold;
    fill: #4f8fdf;
    text-anchor: middle;
}

.glyph-omega {
    font-family: "Liberation Serif", serif;
    font-size: 72px;
    line-height: 60px;
    color: #bdd3ee;
}

/* rulers */
.editor {
    flex: 1;
    display: flex;
    flex-direction: column;
    min-height: 0;
}

.ruler-row {
    height: 32px;
    flex: none;
    display: flex;
    background: #fff;
    border-bottom: 2px solid #e2e2e2;
}

.ruler-gutter {
    width: 41px;
    flex: none;
    padding-left: 7px;
    background: #f5f5f5;
}

.ruler-corner {
    height: 100%;
    border-left: 2px solid #cfcfcf;
    background: linear-gradient(135deg, #efefef, #fafafa 70%);
}

.ruler-h {
    flex: 1;
    padding-left: 419px;
    border-left: 2px solid #d8d8d8;
}

.scale-h {
    position: relative;
    width: 2018px;
    height: 30px;
    display: flex;
    padding-left: 15px;
    color: #888;
    font-size: 19px;
    line-height: 20px;
    background:
        repeating-linear-gradient(90deg, transparent 0 15px, #c4c4c4 15px 17px, transparent 17px 60.125px) left bottom / 100% 18px no-repeat,
        repeating-linear-gradient(90deg, #c4c4c4 0 2px, transparent 2px 15.031px) left bottom / 100% 8px no-repeat;
}

.scale-h span {
    width: 60.125px;
    flex: none;
    text-align: center;
    background: #fff;
    height: 20px;
}

.scale-h::before, .scale-h::after {
    content: "";
    position: absolute;
    top: 8px;
    width: 2px;
    height: 30px;
    background: #c4c4c4;
}

.scale-h::before { left: -6px; }
.scale-h::after { right: 0; }

.editor-body {
    flex: 1;
    display: flex;
    min-height: 0;
}

.rail {
    width: 58px;
    flex: none;
    background: #f6f6f6;
}

.ruler-v {
    width: 35px;
    height: 100%;
    margin-left: 7px;
    padding-top: 118px;
    background: #fff;
    border-left: 2px solid #cfcfcf;
    border-right: 2px solid #d8d8d8;
}

.scale-v {
    position: relative;
    width: 31px;
    height: 1142px;
    color: #888;
    font-size: 19px;
    background:
        repeating-linear-gradient(180deg, transparent 0 60px, #c4c4c4 60px 62px, transparent 62px 60px) right top / 18px 100% no-repeat,
        repeating-linear-gradient(180deg, #c4c4c4 0 2px, transparent 2px 15px) right top / 8px 100% no-repeat;
}

.scale-v span {
    height: 60px;
    width: 20px;
    display: flex;
    align-items: center;
    justify-content: center;
    writing-mode: vertical-rl;
    transform: rotate(180deg);
    background: #fff;
}

.scale-v::before, .scale-v::after {
    content: "";
    position: absolute;
    left: 8px;
    width: 30px;
    height: 2px;
    background: #c4c4c4;
}

.scale-v::before { top: 0; }
.scale-v::after { bottom: 0; }

.canvas-band {
    flex: 1;
    padding-top: 16px;
    background: #f6f6f6;
}

.canvas {
    height: 100%;
    padding: 103px 0 0 397px;
    background: #ececec;
}

.slide {
    width: 2030px;
    height: 1141px;
    background: #fff;
    border: 1px solid #d6d6d6;
    box-shadow: 0 0 36px rgba(0, 0, 0, 0.11);
}

/* notes and status */
.notes {
    height: 88px;
    flex: none;
    display: flex;
    align-items: center;
    padding: 0 0 28px 25px;
    background: linear-gradient(90deg, #f5f5f5 7px, #cfcfcf 7px 9px, #ececec 9px);
    border-top: 2px solid #cfcfcf;
    font-size: 26px;
    color: #2c2c2c;
}

.statusbar {
    height: 46px;
    flex: none;
    display: flex;
    justify-content: space-between;
    border-top: 2px solid #a9a9a9;
    background: linear-gradient(#e6e6e6, #d2d2d2);
    color: #666;
    font-size: 23px;
}

.status-left {
    display: flex;
    align-items: center;
    gap: 43px;
    padding-left: 49px;
    word-spacing: 4px;
}

.status-right {
    display: grid;
    grid-template-columns: 124px 104px 73px 72px 72px 70px 50px 196px 49px 100px 72px;
    justify-items: center;
    align-items: center;
    padding-right: 33px;
}

.status-item {
    justify-self: start;
    display: flex;
    align-items: center;
    gap: 9px;
}

.view-active {
    width: 100%;
    height: 100%;
    display: flex;
    align-items: center;
    justify-content: center;
    background: #a8a8a8;
}

.zoom-minus {
    display: block;
    width: 16px;
    height: 5px;
    background: #666;
}

.zoom-track {
    position: relative;
    width: 196px;
    height: 8px;
    border-radius: 4px;
    background: #9a9a9a;
}

.zoom-thumb {
    position: absolute;
    left: 89px;
    top: -8px;
    width: 22px;
    height: 23px;
    border-radius: 50%;
    background: #fff;
    box-shadow: 0 0 2px rgba(0, 0, 0, 0.5);
}

.zoom-pct {
    color: #5c5c5c;
}

/* gallery menu, opens over the ribbon */
.gallery {
    position: absolute;
    left: 1233px;
    top: 212px;
    width: 653px;
    height: 858px;
    padding: 9px 0 0 7px;
    background: #fff;
    border: 1px solid #dcdcdc;
    border-radius: 12px;
    box-shadow: 0 8px 34px rgba(0, 0, 0, 0.24);
}

.gallery-grid {
    display: grid;
    grid-template-columns: repeat(5, 127.75px);
    grid-template-rows: 137px 139px 130px 155px 128px 140px;
}

.cell {
    display: flex;
    flex-direction: column;
    align-items: center;
}

.cell-label {
    font-size: 18px;
    line-height: 21.500px;
    text-align: center;
    white-space: nowrap;
    color: #2e2e2e;
}

.cell-label-low {
    margin-top: 2px;
}

.line { stroke: #3a3a3a; stroke-width: 2; }
.line.thin { stroke-width: 1.600; fill: none; }
.base { stroke: #3a3a3a; stroke-width: 2; fill: none; }
.blue { fill: #60a0ef; }
.light { fill: #99c2f5; }
.mid { fill: #4691ec; }
.dark { fill: #3368ad; }
.ink { fill: #3a3a3a; }
.red { fill: #c8003c; }

.g-a {
    font-size: 24px;
    font-weight: bold;
    fill: #60a0ef;
}

.g-x {
    font-size: 21px;
    font-weight: bold;
    fill: #fff;
}

.g-tag {
    font-size: 23px;
    font-weight: bold;
    fill: #fff;
}

/* red hand-drawn markup on top of the screenshot */
.markup {
    position: absolute;
    left: 0;
    top: 0;
    pointer-events: none;
}

.markup path {
    fill: none;
    stroke: #ee4023;
    stroke-width: 5;
}

.mark-note {
    position: absolute;
    font-size: 59px;
    font-weight: 300;
    line-height: 60px;
    color: #ee5240;
    white-space: nowrap;
}

.note-basic { left: 1282px; top: 322px; }
.note-agenda { left: 1633px; top: 398px; }
.note-charts { left: 1450px; top: 673px; }
```
